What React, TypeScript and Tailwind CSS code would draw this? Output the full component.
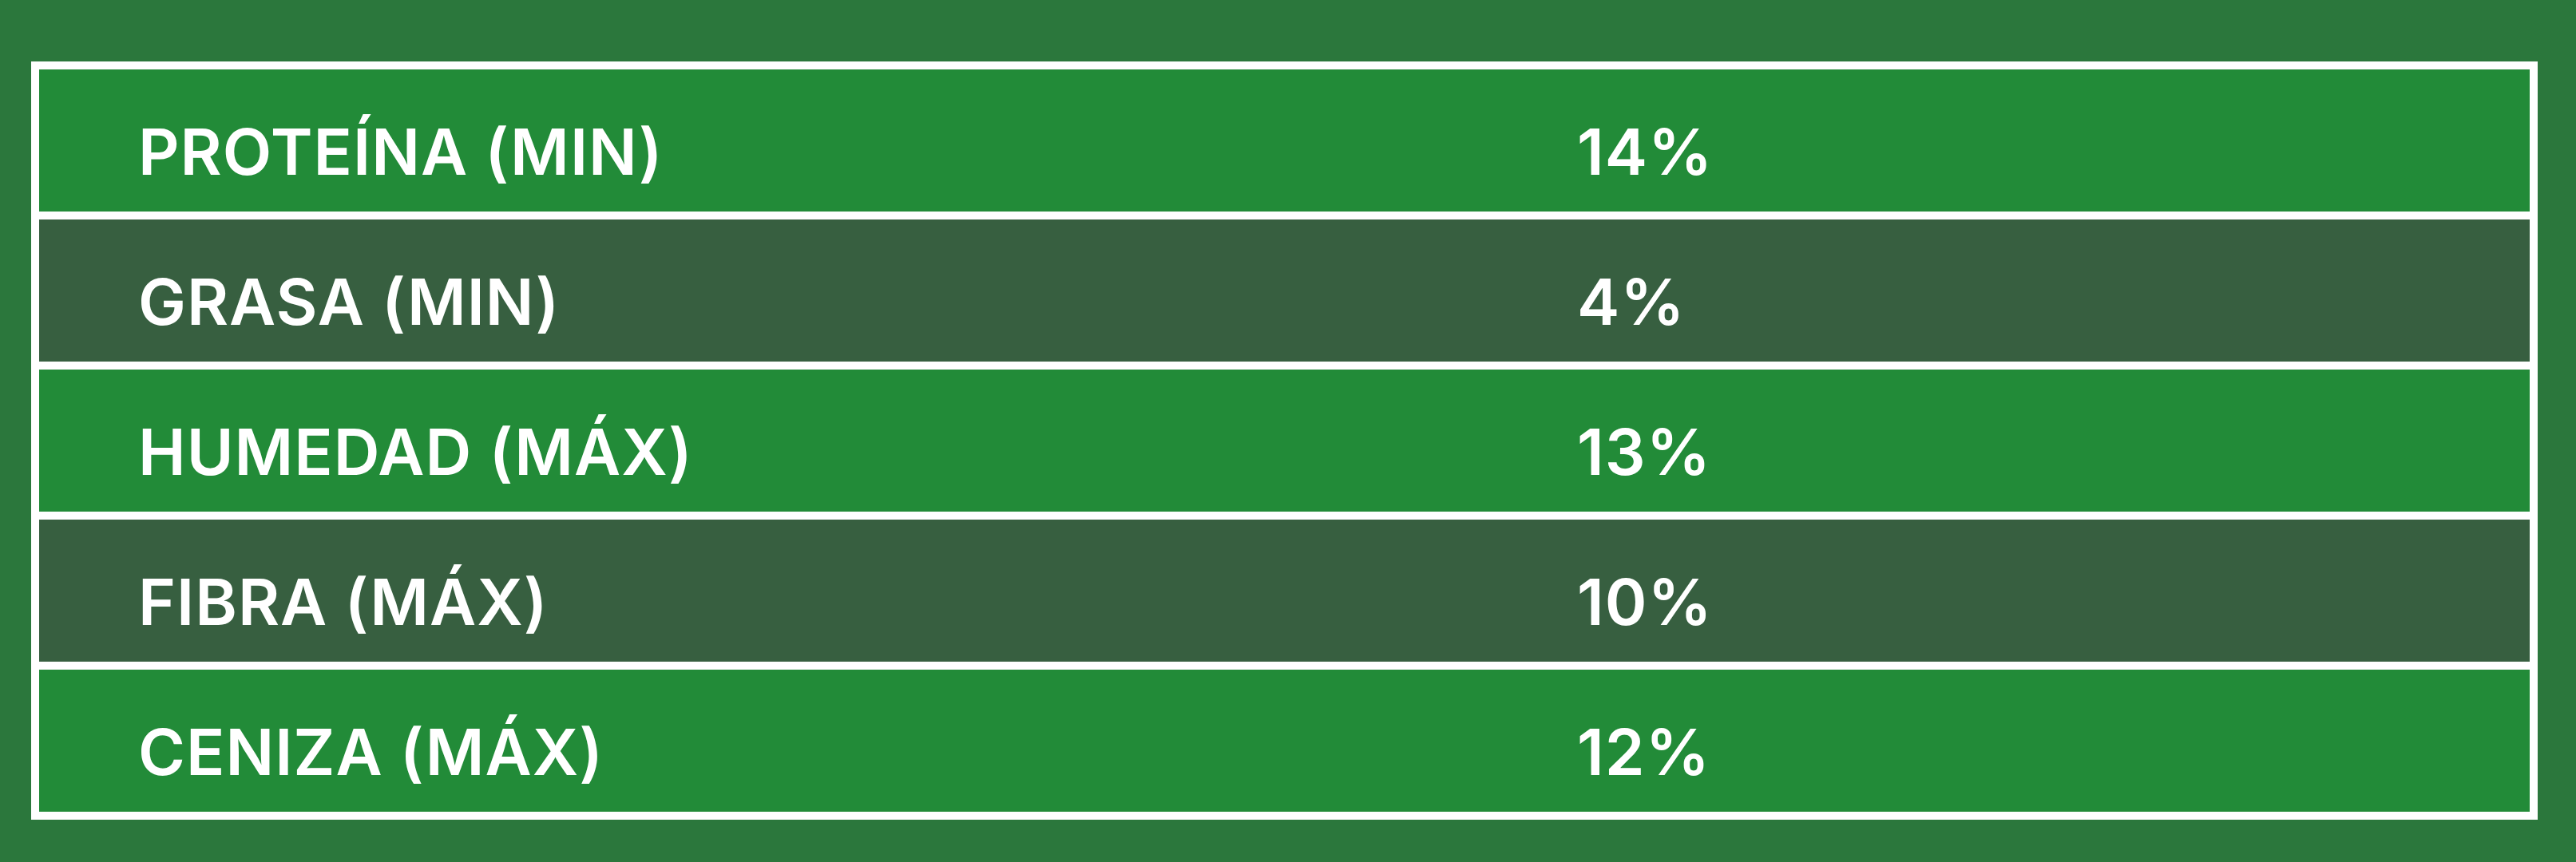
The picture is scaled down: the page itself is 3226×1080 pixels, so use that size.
import React from "react";

const rows = [
  { label: "PROTEÍNA (MIN)", value: "14%", dark: false },
  { label: "GRASA (MIN)", value: "4%", dark: true },
  { label: "HUMEDAD (MÁX)", value: "13%", dark: false },
  { label: "FIBRA (MÁX)", value: "10%", dark: true },
  { label: "CENIZA (MÁX)", value: "12%", dark: false },
];

export default function App() {
  return (
    <div
      className="w-[3226px] h-[1080px] bg-[#2b773c] pt-[77px] pl-[39px]"
      style={{ fontFamily: "Inter, 'Noto Sans', sans-serif" }}
    >
      <div className="w-[3139px] bg-white p-[10px] flex flex-col gap-[10px]">
        {rows.map((r) => (
          <div
            key={r.label}
            className={`h-[178px] flex items-center pt-[28px] text-white text-[80px] font-semibold leading-none tracking-[1px] ${
              r.dark ? "bg-[#375f40]" : "bg-[#228b38]"
            }`}
          >
            <div className="w-[1926px] pl-[124px]">{r.label}</div>
            <div>{r.value}</div>
          </div>
        ))}
      </div>
    </div>
  );
}
